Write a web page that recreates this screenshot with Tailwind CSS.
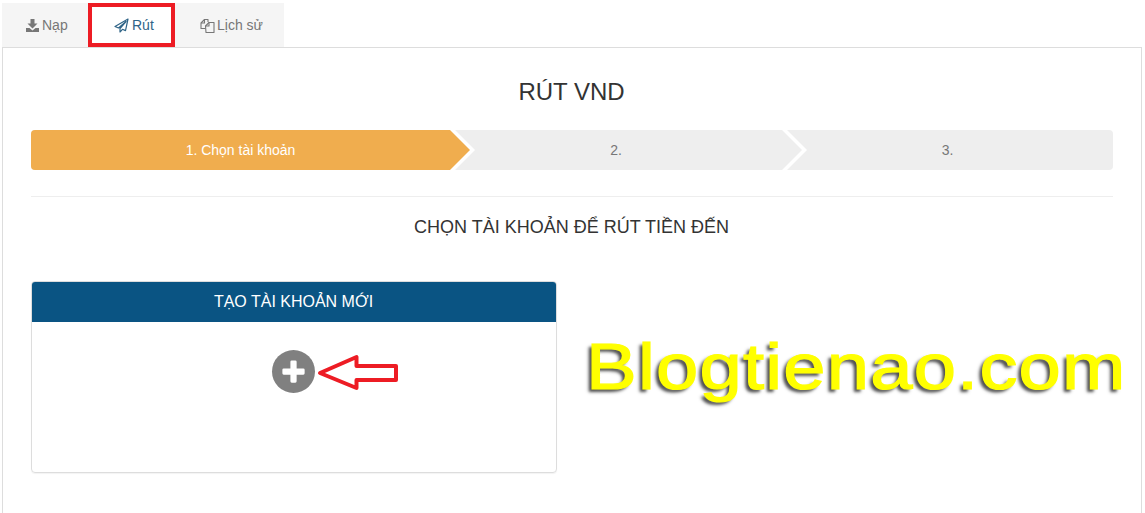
<!DOCTYPE html>
<html><head><meta charset="utf-8">
<script src="https://cdn.jsdelivr.net/npm/@tailwindcss/browser@4"></script>
</head>
<body class="bg-white overflow-hidden h-[513px] font-['Liberation_Sans',Arial,sans-serif] text-[14px] text-[#333] relative">
<div class="pl-[2px] pt-[3px] h-[513px] overflow-hidden">
  <div class="flex h-[44px]">
    <div class="w-[86px] bg-[#f5f5f5] flex items-center pl-[24px] gap-[3px] text-[#777]">
      <svg class="w-[13px] h-[13px]" viewBox="0 0 13 13" fill="#777"><path d="M4.500 0h4v4.500h3L6.500 9.500 1.500 4.500h3z"/><path d="M0 9h3.500l3 2.500 3-2.500H13v4H0z"/></svg>
      <span>Nạp</span>
    </div>
    <div class="w-[87px] bg-white border-4 border-[#ed1c24] flex items-center pl-[22px] gap-[3px] text-[#2f6487]">
      <svg class="w-[15px] h-[15px]" viewBox="0 0 15 15" fill="none" stroke="#2f6487" stroke-width="1.200" stroke-linejoin="round"><path d="M14 1 1 8.500l3.500 1.500L12 3.500 6 10.500v3.500l2.500-2.700 3 1.300z"/></svg>
      <span>Rút</span>
    </div>
    <div class="w-[109px] bg-[#f5f5f5] flex items-center pl-[25px] gap-[2px] text-[#777]">
      <svg class="w-[15px] h-[15px]" viewBox="0 0 15 15" fill="none" stroke="#777" stroke-width="1.100" stroke-linejoin="round"><path d="M5.500 10.500H1V5l3.500-3.500H8V4"/><path d="M5.500 8 9 4.500h5v10H6z"/><path d="M9 4.500V8H5.500"/><path d="M4.500 1.500V5H1"/></svg>
      <span>Lịch sử</span>
    </div>
  </div>
  <div class="w-[1140px] h-[500px] border border-[#ddd] px-[28px]">
    <h2 class="text-[24px] leading-[26px] text-center mt-[31px] text-[#333] pr-[1px]">RÚT VND</h2>
    <div class="flex h-[40px] mt-[25px] bg-[#eee] rounded-[4px] text-[#777]">
      <div class="relative w-[419px] bg-[#f0ad4e] rounded-l-[4px] flex items-center justify-center text-white">1. Chọn tài khoản
        <svg class="absolute left-[419px] top-0 z-10" width="25" height="40"><polygon points="0,0 5,0 25,20 5,40 0,40" fill="#fff"/><polygon points="0,0 0,40 20,20" fill="#f0ad4e"/></svg>
      </div>
      <div class="relative w-[332px] flex items-center justify-center">2.
        <svg class="absolute left-[332px] top-0 z-10" width="25" height="40"><polygon points="0,0 5,0 25,20 5,40 0,40" fill="#fff"/><polygon points="0,0 0,40 20,20" fill="#eee"/></svg>
      </div>
      <div class="w-[331px] flex items-center justify-center">3.</div>
    </div>
    <div class="h-px bg-[#eee] mt-[26px]"></div>
    <h3 class="text-[18px] leading-[20px] text-center mt-[20px] text-[#333] pr-[1px]">CHỌN TÀI KHOẢN ĐỂ RÚT TIỀN ĐẾN</h3>
    <div class="w-[526px] h-[192px] mt-[44px] border border-[#ddd] rounded-[4px] shadow-[0_1px_1px_rgba(0,0,0,0.05)] overflow-hidden">
      <div class="h-[40px] bg-[#0a5483] text-white text-[16px] flex items-center justify-center pr-[1px]">TẠO TÀI KHOẢN MỚI</div>
      <div class="flex justify-center pt-[28px] pr-[2px]">
        <div class="w-[43px] h-[43px] rounded-full bg-[#808080] flex items-center justify-center">
          <svg width="27" height="27" viewBox="0 0 27 27" fill="#fff"><path d="M10 2.500a1.500 1.500 0 0 1 1.500-1.500h4a1.500 1.500 0 0 1 1.500 1.500V10h7.500a1.500 1.500 0 0 1 1.500 1.500v4a1.500 1.500 0 0 1-1.500 1.500H17v7.500a1.500 1.500 0 0 1-1.500 1.500h-4a1.500 1.500 0 0 1-1.500-1.500V17H2.500A1.500 1.500 0 0 1 1 15.500v-4A1.500 1.500 0 0 1 2.500 10H10z" transform="translate(1.500 1.500) scale(.89)"/></svg>
        </div>
      </div>
    </div>
  </div>
</div>
<svg class="absolute left-[316px] top-[352px]" width="86" height="42" fill="none" stroke="#ed1c24" stroke-width="4"><path d="M4 21 40.500 5v9H80v14H40.500v8z" stroke-linejoin="round"/></svg>
<div class="absolute left-[586px] top-[330px] text-[65px] leading-[74px] tracking-[1px] text-[#ffff00] origin-left scale-x-[1.17] [-webkit-text-stroke:1.2px_#ffff00] [text-shadow:-3px_3px_3px_rgba(0,0,0,0.7)] whitespace-nowrap">Blogtienao.com</div>
</body></html>
